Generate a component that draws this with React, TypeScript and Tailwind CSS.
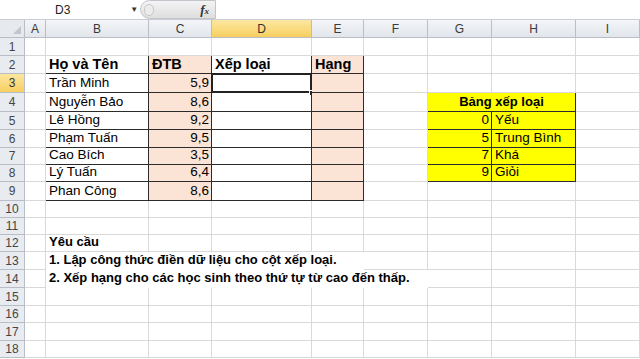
import React from "react";

type Col = { key: string; w: string };

const cols: Col[] = [
  { key: "A", w: "w-[21px]" },
  { key: "B", w: "w-[103px]" },
  { key: "C", w: "w-[63px]" },
  { key: "D", w: "w-[100px]" },
  { key: "E", w: "w-[52px]" },
  { key: "F", w: "w-[64px]" },
  { key: "G", w: "w-[64px]" },
  { key: "H", w: "w-[84px]" },
  { key: "I", w: "w-[64px]" },
];

// row heights read off the screenshot
const rowH = [
  "h-[18px]", "h-[18px]", "h-[19px]", "h-[19px]", "h-[18px]", "h-[18px]",
  "h-[17px]", "h-[17px]", "h-[19px]", "h-[17px]", "h-[17px]", "h-[17px]",
  "h-[18px]", "h-[18px]", "h-[18px]", "h-[17px]", "h-[18px]", "h-[17px]",
];

const students = [
  ["Trần Minh", "5,9"],
  ["Nguyễn Bảo", "8,6"],
  ["Lê Hồng", "9,2"],
  ["Phạm Tuấn", "9,5"],
  ["Cao Bích", "3,5"],
  ["Lý Tuấn", "6,4"],
  ["Phan Công", "8,6"],
];

const grades = [
  ["0", "Yếu"],
  ["5", "Trung Bình"],
  ["7", "Khá"],
  ["9", "Giỏi"],
];

const notes: Record<number, string> = {
  12: "Yêu cầu",
  13: "1. Lập công thức điền dữ liệu cho cột xếp loại.",
  14: "2. Xếp hạng cho các học sinh theo thứ tự từ cao đến thấp.",
};

// columns the overflowing note text covers (gridline hidden under it)
const noteSpan: Record<number, string> = {
  12: "",
  13: "BCDE",
  14: "BCDEF",
};

const inTable1 = (r: number, c: string) => r >= 2 && r <= 9 && "BCDE".includes(c);
const inTable2 = (r: number, c: string) => r >= 4 && r <= 8 && "GH".includes(c);

function cellInfo(r: number, c: string) {
  let text = "";
  let size = "text-[13.5px]";
  let bold = false;
  let right = false;
  let center = false;
  let bg = "";
  let br = "border-[#d9d9d9]";
  let bb = "border-[#d9d9d9]";

  if (inTable1(r, c) || inTable2(r, c)) {
    br = "border-[#2b2b2b]";
    bb = "border-[#2b2b2b]";
  }
  // left edges of the two tables
  if (c === "A" && r >= 2 && r <= 9) br = "border-[#2b2b2b]";
  if (c === "F" && r >= 4 && r <= 8) br = "border-[#2b2b2b]";
  // top edges
  if (r === 1 && "BCDE".includes(c)) bb = "border-[#2b2b2b]";
  if (r === 3 && "GH".includes(c)) bb = "border-[#2b2b2b]";

  if (inTable1(r, c) && (c === "C" || c === "E")) bg = "bg-[#fbe4d5]";
  if (inTable2(r, c)) bg = "bg-[#ffff00]";

  if (r === 2) {
    bold = true;
    size = "text-[14.5px]";
    if (c === "B") text = "Họ và Tên";
    if (c === "C") text = "ĐTB";
    if (c === "D") text = "Xếp loại";
    if (c === "E") text = "Hạng";
  }
  if (r >= 3 && r <= 9) {
    const s = students[r - 3];
    if (c === "B") text = s[0];
    if (c === "C") {
      text = s[1];
      right = true;
    }
  }
  if (r >= 5 && r <= 8) {
    const g = grades[r - 5];
    if (c === "G") {
      text = g[0];
      right = true;
    }
    if (c === "H") text = g[1];
  }
  if (r === 4 && c === "G") {
    text = "Bảng xếp loại";
    bold = true;
    center = true;
    size = "text-[13px]";
  }
  if (notes[r] && c === "B") {
    text = notes[r];
    bold = true;
    size = "text-[13px]";
  }
  if (noteSpan[r] && noteSpan[r].includes(c)) br = "border-transparent";

  return { text, size, bold, right, center, bg, br, bb };
}

const Corner = () => (
  <div className="relative h-full w-[25px] shrink-0 border-r border-b border-[#b9bec6] bg-[#e6e9ee]">
    <svg className="absolute right-[3px] bottom-[3px]" width="8" height="8" viewBox="0 0 8 8">
      <polygon points="8,0 8,8 0,8" fill="#c2c6cc" />
    </svg>
  </div>
);

const TopBar = () => (
  <div className="flex h-[20px] items-center border-b border-[#c9cdd3] bg-white">
    <div className="flex w-[140px] items-center">
      <span className="ml-[55px] text-[12px] text-[#222]">D3</span>
      <span className="ml-[60px] text-[8px] text-[#333]">▼</span>
    </div>
    <div className="flex h-full w-[76px] items-center justify-between rounded-l-full border border-[#c2c6cc] bg-gradient-to-b from-[#f4f4f4] to-[#dedede] pl-[3px] pr-[6px]">
      <div className="h-[12px] w-[10px] rounded-full border border-[#c8c8c8] bg-[#ececec]" />
      <span className="font-['Liberation_Serif',serif] text-[13px] italic font-bold text-[#333]">
        f<span className="text-[9px]">x</span>
      </span>
    </div>
    <div className="h-full flex-1 bg-white" />
  </div>
);

const HeaderRow = () => (
  <div className="flex h-[18px]">
    <Corner />
    {cols.map((c) => (
      <div
        key={c.key}
        className={`${c.w} flex shrink-0 items-center justify-center border-r border-b border-[#b9bec6] text-[12px] ${
          c.key === "D"
            ? "bg-gradient-to-b from-[#fce7a0] to-[#f6cf5e] text-[#333]"
            : "bg-gradient-to-b from-[#f3f5f8] to-[#e2e6eb] text-[#3a3a3a]"
        }`}
      >
        {c.key}
      </div>
    ))}
    <div className="flex-1 border-b border-[#b9bec6] bg-[#e6e9ee]" />
  </div>
);

const Row = ({ r }: { r: number }) => {
  const h = rowH[r - 1];
  return (
    <div className={`flex ${h}`}>
      <div
        className={`flex w-[25px] shrink-0 items-center justify-center border-r border-b border-[#b9bec6] text-[12px] ${
          r === 3
            ? "bg-gradient-to-b from-[#fce7a0] to-[#f6cf5e] text-[#333]"
            : "bg-[#e8ebef] text-[#454545]"
        }`}
      >
        {r}
      </div>
      {cols.map((c) => {
        if (r === 4 && c.key === "H") return null;
        const info = cellInfo(r, c.key);
        const w = r === 4 && c.key === "G" ? "w-[148px]" : c.w;
        const selected = r === 3 && c.key === "D";
        return (
          <div
            key={c.key}
            className={`${w} relative flex shrink-0 items-end border-r border-b pb-[1px] ${info.br} ${info.bb} ${info.bg} ${
              info.right ? "justify-end pr-[2px]" : info.center ? "justify-center" : "pl-[3px]"
            }`}
          >
            {info.text && (
              <span
                className={`whitespace-nowrap ${info.size} leading-[16px] text-black ${info.bold ? "font-bold" : ""} ${
                  notes[r] ? "relative z-10" : ""
                }`}
              >
                {info.text}
              </span>
            )}
            {selected && (
              <>
                <div className="absolute -top-[1px] -left-[1px] -right-[1px] -bottom-[1px] border-2 border-[#222]" />
                <div className="absolute -right-[4px] -bottom-[4px] h-[6px] w-[6px] border border-white bg-[#222]" />
              </>
            )}
          </div>
        );
      })}
    </div>
  );
};

export default function App() {
  const rows = Array.from({ length: 18 }, (_, i) => i + 1);
  return (
    <div className="h-[359px] w-[640px] overflow-hidden bg-white font-['Liberation_Sans',Arial,sans-serif]">
      <TopBar />
      <HeaderRow />
      {rows.map((r) => (
        <Row key={r} r={r} />
      ))}
    </div>
  );
}
